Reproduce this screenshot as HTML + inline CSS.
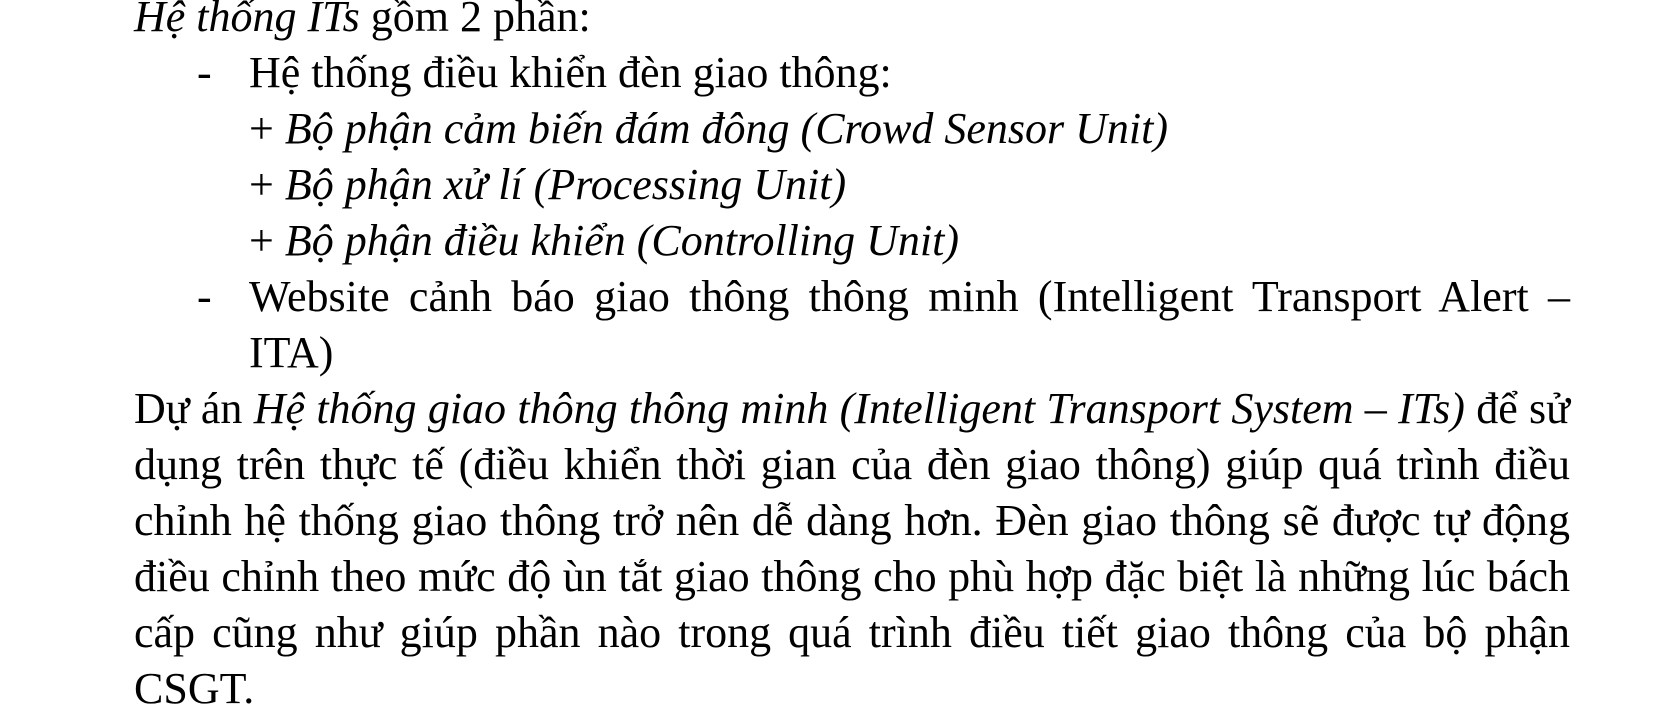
<!DOCTYPE html>
<html><head><meta charset="utf-8"><style>
html,body{margin:0;padding:0;background:#fff;width:1666px;height:727px;overflow:hidden}
body{font-family:"Liberation Serif",serif;font-size:44px;color:#000}
.wrap{position:absolute;left:134px;top:-11px;width:1436px;line-height:56px}
.l{white-space:nowrap;height:56px;position:relative}
.j{text-align:justify;text-align-last:justify;white-space:normal}
.ind{margin-left:115px}
.dash{position:absolute;left:-52px}
i{font-style:italic}
</style></head><body>
<div class="wrap">
<div class="l"><i>Hệ thống ITs</i> gồm 2 phần:</div>
<div class="l ind"><span class="dash">-</span>Hệ thống điều khiển đèn giao thông:</div>
<div class="l ind">+ <i>Bộ phận cảm biến đám đông (Crowd Sensor Unit)</i></div>
<div class="l ind">+ <i>Bộ phận xử lí (Processing Unit)</i></div>
<div class="l ind">+ <i>Bộ phận điều khiển (Controlling Unit)</i></div>
<div class="l ind j"><span class="dash">-</span>Website cảnh báo giao thông thông minh (Intelligent Transport Alert –</div>
<div class="l ind">ITA)</div>
<div class="l j">Dự án <i>Hệ thống giao thông thông minh (Intelligent Transport System – ITs)</i> để sử</div>
<div class="l j">dụng trên thực tế (điều khiển thời gian của đèn giao thông) giúp quá trình điều</div>
<div class="l j">chỉnh hệ thống giao thông trở nên dễ dàng hơn. Đèn giao thông sẽ được tự động</div>
<div class="l j">điều chỉnh theo mức độ ùn tắt giao thông cho phù hợp đặc biệt là những lúc bách</div>
<div class="l j">cấp cũng như giúp phần nào trong quá trình điều tiết giao thông của bộ phận</div>
<div class="l">CSGT.</div>
</div>
</body></html>
